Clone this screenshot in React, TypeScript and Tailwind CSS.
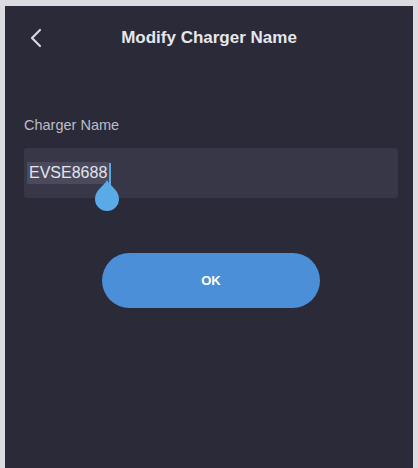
export default function App() {
  return (
    <div className="w-[418px] h-[468px] bg-[#dcdce0] pl-[5px] pr-[5px] pt-[6px] overflow-hidden" style={{ fontFamily: '"Liberation Sans", Arial, sans-serif' }}>
      <div className="w-full h-full bg-[#2a2a38] flex flex-col">
        {/* header */}
        <div className="relative h-[62px] flex items-center justify-center">
          <svg className="absolute left-[24px] top-[22px]" width="14" height="20" viewBox="0 0 14 20" fill="none">
            <path d="M11 2 L3 10 L11 18" stroke="#d8d8e0" strokeWidth="2.2" strokeLinecap="round" strokeLinejoin="round" />
          </svg>
          <h1 className="text-[17px] font-bold text-[#e6e6ee] pt-[1px]">Modify Charger Name</h1>
        </div>

        <div className="pt-[47px] pl-[19px] pr-[15px]">
          <p className="text-[14.5px] leading-[20px] text-[#bdbdc8]">Charger Name</p>
          <div className="relative mt-[13px] h-[50px] bg-[#373747] rounded-[3px] flex items-center pl-[3px]">
            <span className="text-[16px] text-[#e4e4ec] bg-[#4a4a5c] px-[2px] leading-[22px]">EVSE8688</span>
            <span className="w-[2px] h-[26px] bg-[#5aa6e6] mt-[6px]" />
            {/* selection handle */}
            <svg className="absolute left-[71px] top-[30px]" width="24" height="34" viewBox="0 0 24 34">
              <path d="M12 2 C 15 8, 24 12, 24 21 A 12 12 0 0 1 0 21 C 0 12, 9 8, 12 2 Z" fill="#5aaae8" />
            </svg>
          </div>
        </div>

        <div className="flex justify-center pt-[55px] pl-[4px]">
          <button className="w-[218px] h-[55px] rounded-full bg-[#4a8fd8] text-white text-[13px] font-bold">OK</button>
        </div>
      </div>
    </div>
  );
}
